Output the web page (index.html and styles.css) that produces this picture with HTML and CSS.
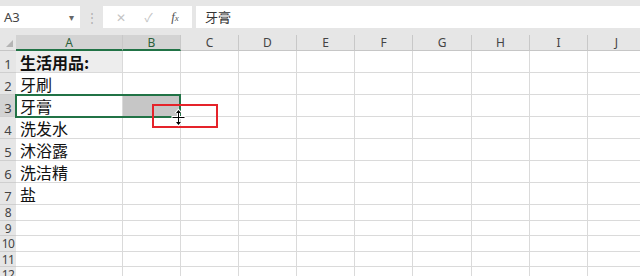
FILE: index.html
```html
<!DOCTYPE html>
<html lang="zh">
<head>
    <meta charset="UTF-8">
    <title>生活用品</title>
    <link rel="stylesheet" href="styles.css">
</head>
<body>

<div class="toolbar">
    <div class="namebox">
        <span>A3</span>
        <span class="caret">&#9662;</span>
    </div>
    <div class="grip">&#8942;</div>
    <div class="buttons">
        <span class="btn">&#10005;</span>
        <span class="btn">&#10003;</span>
        <span class="btn fx"><i>f</i><small>x</small></span>
    </div>
    <div class="formula">牙膏</div>
</div>

<div class="sheet">
    <div class="corner"><span class="tri"></span></div>
    <div class="colhead on">A</div>
    <div class="colhead on">B</div>
    <div class="colhead">C</div>
    <div class="colhead">D</div>
    <div class="colhead">E</div>
    <div class="colhead">F</div>
    <div class="colhead">G</div>
    <div class="colhead">H</div>
    <div class="colhead">I</div>
    <div class="colhead">J</div>

    <div class="rowhead">1</div>
    <div class="cell title">生活用品:</div>
    <div class="cell"></div><div class="cell"></div><div class="cell"></div><div class="cell"></div><div class="cell"></div><div class="cell"></div><div class="cell"></div><div class="cell"></div><div class="cell"></div>

    <div class="rowhead">2</div>
    <div class="cell">牙刷</div>
    <div class="cell"></div><div class="cell"></div><div class="cell"></div><div class="cell"></div><div class="cell"></div><div class="cell"></div><div class="cell"></div><div class="cell"></div><div class="cell"></div>

    <div class="rowhead on">3</div>
    <div class="cell">牙膏</div>
    <div class="cell picked"></div><div class="cell"></div><div class="cell"></div><div class="cell"></div><div class="cell"></div><div class="cell"></div><div class="cell"></div><div class="cell"></div><div class="cell"></div>

    <div class="rowhead">4</div>
    <div class="cell">洗发水</div>
    <div class="cell"></div><div class="cell"></div><div class="cell"></div><div class="cell"></div><div class="cell"></div><div class="cell"></div><div class="cell"></div><div class="cell"></div><div class="cell"></div>

    <div class="rowhead">5</div>
    <div class="cell">沐浴露</div>
    <div class="cell"></div><div class="cell"></div><div class="cell"></div><div class="cell"></div><div class="cell"></div><div class="cell"></div><div class="cell"></div><div class="cell"></div><div class="cell"></div>

    <div class="rowhead">6</div>
    <div class="cell">洗洁精</div>
    <div class="cell"></div><div class="cell"></div><div class="cell"></div><div class="cell"></div><div class="cell"></div><div class="cell"></div><div class="cell"></div><div class="cell"></div><div class="cell"></div>

    <div class="rowhead">7</div>
    <div class="cell">盐</div>
    <div class="cell"></div><div class="cell"></div><div class="cell"></div><div class="cell"></div><div class="cell"></div><div class="cell"></div><div class="cell"></div><div class="cell"></div><div class="cell"></div>

    <div class="rowhead small">8</div>
    <div class="cell"></div><div class="cell"></div><div class="cell"></div><div class="cell"></div><div class="cell"></div><div class="cell"></div><div class="cell"></div><div class="cell"></div><div class="cell"></div><div class="cell"></div>

    <div class="rowhead small">9</div>
    <div class="cell"></div><div class="cell"></div><div class="cell"></div><div class="cell"></div><div class="cell"></div><div class="cell"></div><div class="cell"></div><div class="cell"></div><div class="cell"></div><div class="cell"></div>

    <div class="rowhead small">10</div>
    <div class="cell"></div><div class="cell"></div><div class="cell"></div><div class="cell"></div><div class="cell"></div><div class="cell"></div><div class="cell"></div><div class="cell"></div><div class="cell"></div><div class="cell"></div>

    <div class="rowhead small">11</div>
    <div class="cell"></div><div class="cell"></div><div class="cell"></div><div class="cell"></div><div class="cell"></div><div class="cell"></div><div class="cell"></div><div class="cell"></div><div class="cell"></div><div class="cell"></div>

    <div class="rowhead small">12</div>
    <div class="cell"></div><div class="cell"></div><div class="cell"></div><div class="cell"></div><div class="cell"></div><div class="cell"></div><div class="cell"></div><div class="cell"></div><div class="cell"></div><div class="cell"></div>

    <!-- selected range A3:B3 -->
    <div class="selection"></div>

    <!-- annotation + row resize cursor -->
    <div class="mark"></div>
    <svg class="cursor" width="15" height="19" viewBox="0 0 15 19">
        <path d="M7.5 0.5 L11.5 5 L9 5 L9 8 L14.5 8 L14.5 11 L9 11 L9 14 L11.5 14 L7.5 18.5 L3.5 14 L6 14 L6 11 L0.5 11 L0.5 8 L6 8 L6 5 L3.5 5 Z" fill="#fff"/>
        <path d="M7.5 2 L10 5 L8 5 L8 9 L13.5 9 L13.5 10 L8 10 L8 14 L10 14 L7.5 17 L5 14 L7 14 L7 10 L1.5 10 L1.5 9 L7 9 L7 5 L5 5 Z" fill="#000"/>
    </svg>
</div>

</body>
</html>
```

FILE: styles.css
```css
body {
    margin: 0;
    background: #e6e6e6;
    font-family: "Noto Sans", "Noto Sans CJK SC", sans-serif;
    overflow: hidden;
}
.toolbar {
    display: flex;
    align-items: center;
    height: 22px;
    padding: 6px 0 7px 0;
}
.namebox {
    width: 80px;
    height: 22px;
    background: #fff;
    display: flex;
    align-items: center;
    justify-content: space-between;
    padding: 0 6px 0 4px;
    box-sizing: border-box;
    font-size: 13px;
    color: #444;
}
.caret {
    font-size: 10px;
    color: #666;
}
.grip {
    width: 23px;
    text-align: center;
    color: #b0b0b0;
    font-size: 12px;
}
.buttons {
    width: 89px;
    height: 22px;
    background: #fff;
    display: flex;
    align-items: center;
    justify-content: space-around;
    padding: 0 4px;
    box-sizing: border-box;
    color: #c4c4c4;
    font-size: 12px;
}
.fx {
    color: #555;
    font-family: "Liberation Serif", serif;
    font-size: 13px;
}
.fx small {
    font-size: 9px;
    font-style: italic;
}
.formula {
    flex: 1;
    height: 22px;
    margin-left: 4px;
    background: #fff;
    font-size: 13px;
    line-height: 22px;
    padding-left: 9px;
    color: #333;
}
.sheet {
    position: relative;
    display: grid;
    grid-template-columns: 16px 107px 58px 58px 58px 58px 58px 59px 58px 58px 58px;
    grid-template-rows: 16px repeat(7, 22px) repeat(5, 15.5px);
    background: #fff;
}
.corner {
    background: #e6e6e6;
    border-bottom: 1px solid #c6c6c6;
    position: relative;
}
.tri {
    position: absolute;
    right: 3px;
    bottom: 3px;
    width: 0;
    height: 0;
    border-left: 7px solid transparent;
    border-bottom: 7px solid #b4b4b4;
}
.colhead {
    background: #e6e6e6;
    border-right: 1px solid #c8c8c8;
    border-bottom: 1px solid #c6c6c6;
    box-sizing: border-box;
    font-size: 12px;
    color: #444;
    text-align: center;
    line-height: 15px;
}
.colhead.on {
    background: #d3d3d3;
    border-bottom: 2px solid #217346;
    color: #2c5f3a;
}
.rowhead {
    background: #e6e6e6;
    border-bottom: 1px solid #cfcfcf;
    box-sizing: border-box;
    font-size: 13px;
    color: #444;
    text-align: center;
    line-height: 26px;
    overflow: hidden;
}
.rowhead.on {
    background: #d3d3d3;
}
.rowhead.small {
    font-size: 12px;
    line-height: 16px;
    letter-spacing: -0.5px;
}
.cell {
    border-right: 1px solid #dadada;
    border-bottom: 1px solid #dadada;
    box-sizing: border-box;
    font-family: "Noto Sans CJK SC", sans-serif;
    font-size: 16px;
    line-height: 23px;
    padding-left: 4px;
    color: #111;
    white-space: nowrap;
}
.cell.title {
    background: #ededed;
    font-weight: bold;
}
.cell.picked {
    background: #c6c6c6;
}
.selection {
    position: absolute;
    grid-row: 4 / 5;
    grid-column: 2 / 4;
    top: -1px;
    bottom: -1px;
    left: -1px;
    right: 0;
    border: 2px solid #217346;
    pointer-events: none;
}
.mark {
    position: absolute;
    left: 152px;
    top: 69px;
    width: 66px;
    height: 24px;
    border: 2px solid #e5232a;
    box-sizing: border-box;
}
.cursor {
    position: absolute;
    left: 171px;
    top: 73px;
}
```
